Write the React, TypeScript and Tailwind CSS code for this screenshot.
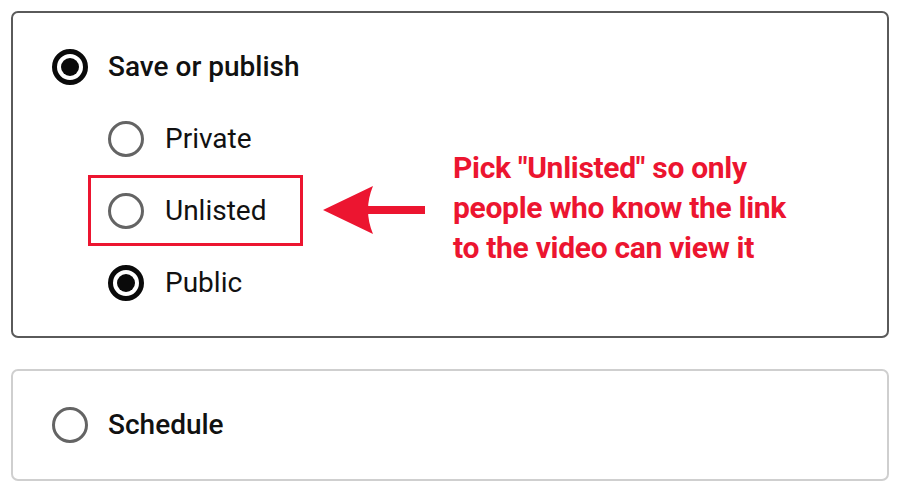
import React from "react";

function Radio({ checked }: { checked: boolean }) {
  return checked ? (
    <div className="w-[36px] h-[36px] rounded-full border-[5px] border-[#0a0a0a] flex items-center justify-center shrink-0">
      <div className="w-[18px] h-[18px] rounded-full bg-[#0a0a0a]" />
    </div>
  ) : (
    <div className="w-[36px] h-[36px] rounded-full border-[3.5px] border-[#646464] shrink-0" />
  );
}

function SubRow({ label, checked, children }: { label: string; checked: boolean; children?: React.ReactNode }) {
  return (
    <div className="relative h-[72px] flex items-center gap-[21px]">
      <Radio checked={checked} />
      <span className="text-[28px] text-[#111] leading-none">{label}</span>
      {children}
    </div>
  );
}

export default function App() {
  return (
    <div className="w-[900px] h-[494px] bg-white px-[11px] pt-[11px] [font-family:Roboto,'Liberation_Sans',sans-serif]">
      <div className="relative h-[327px] border-2 border-[#5a5a5a] rounded-[7px] pt-[18px] pl-[39px]">
        <div className="h-[72px] flex items-center gap-[20px]">
          <Radio checked />
          <span className="text-[28px] font-medium text-[#111] leading-none">Save or publish</span>
        </div>
        <div className="pl-[56px]">
          <SubRow label="Private" checked={false} />
          <SubRow label="Unlisted" checked={false}>
            <div className="absolute left-[-20px] top-0 w-[215px] h-[71px] border-[3px] border-[#ec1530]" />
          </SubRow>
          <SubRow label="Public" checked />
        </div>
        <svg className="absolute left-[310px] top-[172px]" width="116" height="52" viewBox="0 0 116 52">
          <path d="M0 25 L50 1 Q40 25 50 49 Z" fill="#ec1530" />
          <rect x="44" y="21" width="58" height="8" fill="#ec1530" />
        </svg>
        <div className="absolute left-[440px] top-[135px] text-[30px] font-bold leading-[40px] text-[#ec1530] tracking-[-0.3px]">
          <div>Pick "Unlisted" so only</div>
          <div>people who know the link</div>
          <div>to the video can view it</div>
        </div>
      </div>
      <div className="mt-[31px] h-[112px] border-2 border-[#cfcfcf] rounded-[7px] pl-[39px] flex items-center gap-[20px]">
        <Radio checked={false} />
        <span className="text-[28px] font-medium text-[#111] leading-none">Schedule</span>
      </div>
    </div>
  );
}
